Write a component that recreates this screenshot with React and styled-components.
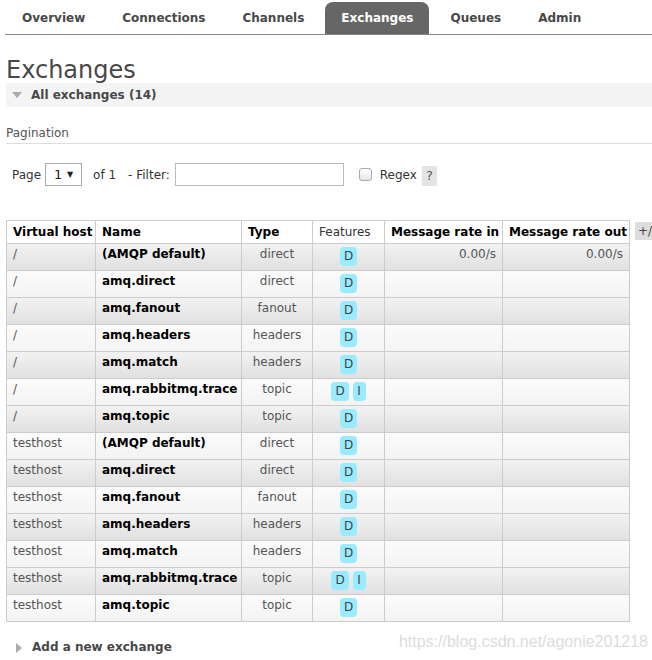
import React from 'react';
import styled, { createGlobalStyle } from 'styled-components';

const GlobalStyle = createGlobalStyle`
  html, body {
    margin: 0;
    padding: 0;
    background: #fff;
  }
  body {
    font-family: "DejaVu Sans", Verdana, sans-serif;
    font-size: 12px;
    color: #484848;
  }
`;

const Page = styled.div`
  position: relative;
  width: 652px;
  height: 660px;
  padding-left: 6px;
  box-sizing: border-box;
  overflow: hidden;
`;

const Nav = styled.ul`
  display: flex;
  gap: 5px;
  list-style: none;
  margin: 2px 0 0 -1px;
  padding: 0 0 0 1px;
  border-bottom: 1px solid #888;
`;

const Tab = styled.li`
  height: 32px;
  padding: 0 16px;
  display: flex;
  align-items: center;
  font-weight: bold;
  font-size: 12px;
  color: ${(p) => (p.$active ? '#fff' : '#484848')};
  background: ${(p) => (p.$active ? '#666' : 'transparent')};
  border-radius: 8px 8px 0 0;
`;

const Title = styled.h1`
  margin: 22px 0 0 0;
  font-size: 24px;
  font-weight: normal;
  line-height: 26px;
  color: #484848;
`;

const SectionBar = styled.div`
  display: flex;
  align-items: center;
  gap: 9px;
  height: 24px;
  padding-left: 6px;
  background: #f4f4f4;
  font-weight: bold;
  color: #484848;
`;

const TriangleDown = styled.span`
  width: 0;
  height: 0;
  border-left: 5px solid transparent;
  border-right: 5px solid transparent;
  border-top: 6px solid #aaa;
`;

const TriangleRight = styled.span`
  width: 0;
  height: 0;
  border-top: 5px solid transparent;
  border-bottom: 5px solid transparent;
  border-left: 6px solid #aaa;
`;

const SubHeading = styled.div`
  margin-top: 19px;
  padding-bottom: 2px;
  line-height: 15px;
  color: #555;
  border-bottom: 1px solid #ddd;
`;

const Controls = styled.div`
  display: flex;
  align-items: center;
  margin-top: 19px;
  padding-left: 6px;
  height: 23px;
  color: #333;
`;

const Label = styled.span`
  margin-right: ${(p) => p.$mr || 0}px;
`;

const SelectBox = styled.div`
  display: flex;
  align-items: center;
  justify-content: space-between;
  box-sizing: border-box;
  width: 37px;
  height: 23px;
  padding: 0 8px 0 8px;
  border: 1px solid #aaa;
  background: #fff;
  margin-right: 11px;
  color: #222;
  font-size: 13px;
`;

const Caret = styled.span`
  font-size: 8px;
  color: #222;
`;

const FilterInput = styled.input`
  box-sizing: border-box;
  width: 169px;
  height: 23px;
  border: 1px solid #bbb;
  margin: 0 15px 0 5px;
  padding: 0 4px;
`;

const Check = styled.span`
  box-sizing: border-box;
  width: 13px;
  height: 13px;
  border: 1px solid #aaa;
  border-radius: 3px;
  background: linear-gradient(#fff, #e6e6e6);
  margin-right: 8px;
`;

const Help = styled.span`
  display: inline-flex;
  align-items: center;
  justify-content: center;
  width: 15px;
  height: 20px;
  margin-left: 5px;
  margin-top: 2px;
  background: #e4e4e4;
  color: #555;
  font-size: 13px;
`;

const TableRow = styled.div`
  display: flex;
  align-items: flex-start;
  margin-top: 34px;
`;

const Table = styled.table`
  border-collapse: collapse;
  table-layout: fixed;
  width: 623px;
`;

const Th = styled.th`
  box-sizing: border-box;
  height: 23px;
  padding: 0 6px;
  border: 1px solid #ccc;
  font-weight: ${(p) => (p.$plain ? 'normal' : 'bold')};
  color: ${(p) => (p.$plain ? '#333' : '#000')};
  text-align: ${(p) => p.$align || 'left'};
  white-space: nowrap;
  vertical-align: middle;
`;

const Tr = styled.tr`
  background: ${(p) =>
    p.$alt
      ? 'linear-gradient(#f2f2f2, #e0e0e0)'
      : 'linear-gradient(#fbfbfb, #f3f3f3)'};
`;

const Td = styled.td`
  box-sizing: border-box;
  height: 26px;
  padding: ${(p) => (p.$badge ? '3px 6px 4px' : '3px 6px 8px')};
  border: 1px solid #ccc;
  vertical-align: top;
  line-height: 15px;
  text-align: ${(p) => p.$align || 'left'};
  color: ${(p) => (p.$strong ? '#000' : '#555')};
  font-weight: ${(p) => (p.$strong ? 'bold' : 'normal')};
  white-space: nowrap;
`;

const Badges = styled.div`
  display: flex;
  justify-content: center;
  gap: 4px;
`;

const Badge = styled.span`
  display: inline-block;
  min-width: 5px;
  padding: 0 4px;
  height: 19px;
  line-height: 19px;
  border-radius: 4px;
  background: #99ebff;
  color: #444;
  text-align: center;
`;

const Toggle = styled.span`
  margin: 2px 0 0 5px;
  padding: 0 3px;
  height: 18px;
  line-height: 18px;
  background: #ddd;
  color: #444;
  white-space: nowrap;
`;

const Footer = styled.div`
  display: flex;
  align-items: center;
  gap: 10px;
  margin-top: 18px;
  padding-left: 10px;
  line-height: 15px;
  font-weight: bold;
  color: #484848;
`;

const Watermark = styled.div`
  position: absolute;
  right: 4px;
  bottom: 9px;
  font-family: "Liberation Sans", Arial, sans-serif;
  font-size: 16px;
  color: #dcdcdc;
`;

const tabs = ['Overview', 'Connections', 'Channels', 'Exchanges', 'Queues', 'Admin'];

const exchanges = [];
['/', 'testhost'].forEach((vhost) => {
  exchanges.push(
    { vhost, name: '(AMQP default)', type: 'direct', features: ['D'], rates: vhost === '/' },
    { vhost, name: 'amq.direct', type: 'direct', features: ['D'] },
    { vhost, name: 'amq.fanout', type: 'fanout', features: ['D'] },
    { vhost, name: 'amq.headers', type: 'headers', features: ['D'] },
    { vhost, name: 'amq.match', type: 'headers', features: ['D'] },
    { vhost, name: 'amq.rabbitmq.trace', type: 'topic', features: ['D', 'I'] },
    { vhost, name: 'amq.topic', type: 'topic', features: ['D'] }
  );
});

const App = () => (
  <Page>
    <GlobalStyle />
    <Nav>
      {tabs.map((t) => (
        <Tab key={t} $active={t === 'Exchanges'}>
          {t}
        </Tab>
      ))}
    </Nav>

    <Title>Exchanges</Title>
    <SectionBar>
      <TriangleDown />
      All exchanges (14)
    </SectionBar>

    <SubHeading>Pagination</SubHeading>
    <Controls>
      <Label $mr={4}>Page</Label>
      <SelectBox>
        1 <Caret>▼</Caret>
      </SelectBox>
      <Label $mr={12}>of 1</Label>
      <Label>- Filter:</Label>
      <FilterInput />
      <Check />
      <Label>Regex</Label>
      <Help>?</Help>
    </Controls>

    <TableRow>
      <Table>
        <colgroup>
          <col style={{ width: 89 }} />
          <col style={{ width: 146 }} />
          <col style={{ width: 71 }} />
          <col style={{ width: 72 }} />
          <col style={{ width: 118 }} />
          <col style={{ width: 127 }} />
        </colgroup>
        <thead>
          <tr>
            <Th>Virtual host</Th>
            <Th>Name</Th>
            <Th>Type</Th>
            <Th $plain>Features</Th>
            <Th>Message rate in</Th>
            <Th>Message rate out</Th>
          </tr>
        </thead>
        <tbody>
          {exchanges.map((e, i) => (
            <Tr key={e.vhost + e.name} $alt={i % 2 === 0}>
              <Td>{e.vhost}</Td>
              <Td $strong>{e.name}</Td>
              <Td $align="center">{e.type}</Td>
              <Td $badge>
                <Badges>
                  {e.features.map((f) => (
                    <Badge key={f}>{f}</Badge>
                  ))}
                </Badges>
              </Td>
              <Td $align="right">{e.rates ? '0.00/s' : ''}</Td>
              <Td $align="right">{e.rates ? '0.00/s' : ''}</Td>
            </Tr>
          ))}
        </tbody>
      </Table>
      <Toggle>+/-</Toggle>
    </TableRow>

    <Footer>
      <TriangleRight />
      Add a new exchange
    </Footer>
    <Watermark>https://blog.csdn.net/agonie201218</Watermark>
  </Page>
);

export default App;
